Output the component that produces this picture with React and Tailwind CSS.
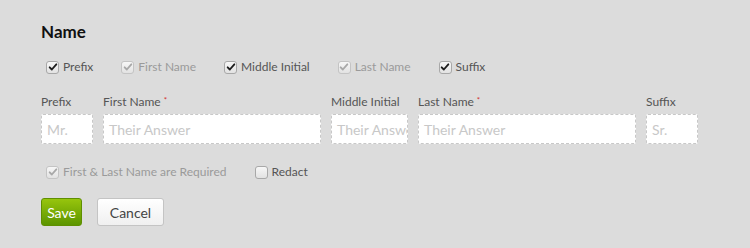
import React from "react";

const FONT = { fontFamily: "Lato, 'Open Sans', Arial, sans-serif" };

function Box({ checked, disabled }) {
  return (
    <span
      className={`inline-flex h-[13px] w-[13px] shrink-0 items-center justify-center rounded-[3px] border bg-gradient-to-b from-[#f7f7f7] to-[#e2e2e2] ${
        disabled ? "border-[#c4c4c4]" : "border-[#a8a8a8]"
      }`}
    >
      {checked && (
        <svg viewBox="0 0 12 12" className="h-[10px] w-[10px]">
          <path
            d="M2 6.4 L4.6 9 L10 2.8"
            fill="none"
            stroke={disabled ? "#a8a8a8" : "#1c1c1c"}
            strokeWidth="2.2"
            strokeLinecap="round"
            strokeLinejoin="round"
          />
        </svg>
      )}
    </span>
  );
}

function Check({ label, checked, disabled }) {
  return (
    <label className="flex items-center gap-[4px]">
      <Box checked={checked} disabled={disabled} />
      <span className={`text-[12px] ${disabled ? "text-[#9a9a9a]" : "text-[#555]"}`}>{label}</span>
    </label>
  );
}

const FIELDS = [
  { label: "Prefix", placeholder: "Mr.", w: "w-[52px]" },
  { label: "First Name", placeholder: "Their Answer", w: "w-[218px]", req: true },
  { label: "Middle Initial", placeholder: "Their Answer", w: "w-[77px]" },
  { label: "Last Name", placeholder: "Their Answer", w: "w-[218px]", req: true },
  { label: "Suffix", placeholder: "Sr.", w: "w-[52px]" },
];

export default function App() {
  return (
    <div className="h-[248px] w-[750px] bg-[#dcdcdc] pl-[41px] pt-[21px]" style={FONT}>
      <h2 className="text-[17px] font-bold leading-[22px] text-[#111]">Name</h2>

      <div className="mt-[15px] flex items-center gap-[28px] pl-[5px]">
        <Check label="Prefix" checked />
        <Check label="First Name" checked disabled />
        <Check label="Middle Initial" checked />
        <Check label="Last Name" checked disabled />
        <Check label="Suffix" checked />
      </div>

      <div className="mt-[19px] flex gap-[10px]">
        {FIELDS.map((f) => (
          <div key={f.label} className={`${f.w} shrink-0`}>
            <div className="h-[14px] text-[12px] leading-[14px] text-[#555]">
              {f.label}
              {f.req && <span className="relative -top-[3px] ml-[3px] text-[8px] text-[#d32f2f]">*</span>}
            </div>
            <div className="mt-[5px] flex h-[30px] items-center overflow-hidden whitespace-nowrap rounded-[2px] border border-dashed border-[#c8c8c8] bg-white px-[5px] text-[14px] text-[#c8c8c8]">
              {f.placeholder}
            </div>
          </div>
        ))}
      </div>

      <div className="mt-[19px] flex items-center gap-[28px] pl-[5px]">
        <Check label="First & Last Name are Required" checked disabled />
        <Check label="Redact" />
      </div>

      <div className="mt-[17px] flex gap-[15px]">
        <button className="h-[28px] w-[41px] rounded-[3px] border border-[#5f8f00] bg-gradient-to-b from-[#97c50d] to-[#5c9500] text-[14px] text-white">
          Save
        </button>
        <button className="h-[28px] w-[67px] rounded-[3px] border border-[#c4c4c4] bg-gradient-to-b from-white to-[#f0f0f0] text-[14px] text-[#444]">
          Cancel
        </button>
      </div>
    </div>
  );
}
